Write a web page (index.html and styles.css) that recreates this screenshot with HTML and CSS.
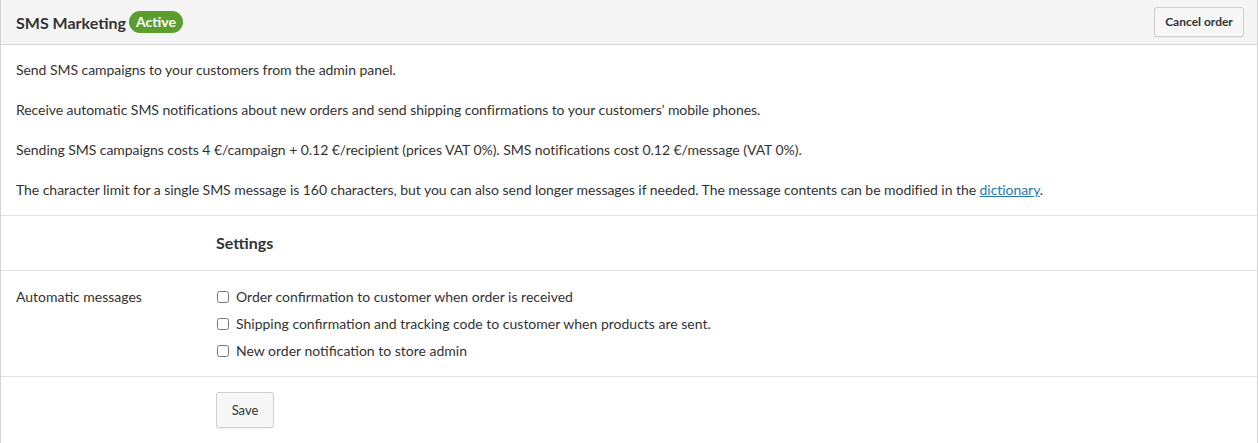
FILE: index.html
```html
<!DOCTYPE html>
<html>
<head>
<meta charset="utf-8">
<link rel="stylesheet" href="styles.css">
</head>
<body>
<div class="panel">
  <div class="panel-header">
    <div class="title"><span class="title-text">SMS Marketing</span><span class="badge">Active</span></div>
    <button class="btn btn-small">Cancel order</button>
  </div>
  <div class="intro">
    <p>Send SMS campaigns to your customers from the admin panel.</p>
    <p>Receive automatic SMS notifications about new orders and send shipping confirmations to your customers’ mobile phones.</p>
    <p>Sending SMS campaigns costs 4 €/campaign + 0.12 €/recipient (prices VAT 0%). SMS notifications cost 0.12 €/message (VAT 0%).</p>
    <p>The character limit for a single SMS message is 160 characters, but you can also send longer messages if needed. The message contents can be modified in the <a href="#">dictionary</a>.</p>
  </div>
  <div class="row row-heading">
    <div class="row-label"></div>
    <div class="row-content"><h2>Settings</h2></div>
  </div>
  <div class="row row-fields">
    <div class="row-label">Automatic messages</div>
    <div class="row-content checks">
      <label class="check"><input type="checkbox"><span>Order confirmation to customer when order is received</span></label>
      <label class="check"><input type="checkbox"><span>Shipping confirmation and tracking code to customer when products are sent.</span></label>
      <label class="check"><input type="checkbox"><span>New order notification to store admin</span></label>
    </div>
  </div>
  <div class="row row-actions">
    <div class="row-label"></div>
    <div class="row-content"><button class="btn btn-save">Save</button></div>
  </div>
</div>
</body>
</html>
```
FILE: styles.css
```css
* { box-sizing: border-box; }
html, body { margin: 0; padding: 0; background: #fff; }
body {
  font-family: Lato, "Open Sans", sans-serif;
  font-size: 14px;
  color: #333;
  width: 1258px;
  height: 443px;
  overflow: hidden;
}
.panel {
  border-left: 1px solid #d4d4d4;
  border-right: 1px solid #d4d4d4;
  min-height: 443px;
}
.panel-header {
  background: #f5f5f5;
  border-bottom: 1px solid #d8d8d8;
  height: 45px;
  display: flex;
  align-items: center;
  justify-content: space-between;
  padding: 0 13px 0 15px;
}
.title {
  display: flex;
  align-items: center;
  font-size: 16px;
  font-weight: 700;
  color: #333;
}
.badge {
  margin-left: 3px;
  background: #5b9e2d;
  color: #fff;
  font-size: 14px;
  font-weight: 700;
  height: 22px;
  line-height: 22px;
  padding: 0 7px;
  border-radius: 11px;
}
.btn {
  font-family: Lato, "Open Sans", sans-serif;
  background: #f7f7f7;
  border: 1px solid #cfcfcf;
  border-radius: 3px;
  color: #333;
  box-shadow: 0 1px 1px rgba(0,0,0,0.06);
  cursor: pointer;
}
.btn-small {
  font-size: 12px;
  font-weight: 700;
  height: 30px;
  width: 90px;
  padding: 0;
  margin-bottom: 1px;
}
.intro {
  padding: 15px 16px 15px 15px;
  border-bottom: 1px solid #e3e3e3;
}
.intro p {
  margin: 0 0 20px;
  line-height: 20px;
  letter-spacing: -0.05px;
}
.intro p:last-child { margin-bottom: 0; }
.intro a { color: #2b78b0; text-decoration: underline; }
.row {
  display: flex;
  border-bottom: 1px solid #e3e3e3;
}
.row:last-child { border-bottom: none; }
.row-label {
  width: 215px;
  flex: none;
  padding-left: 15px;
}
.row-content { flex: 1; }
.row-heading { height: 55px; align-items: center; }
.row-heading h2 {
  margin: 0;
  font-size: 16px;
  font-weight: 700;
  line-height: 22px;
  padding-bottom: 1px;
}
.row-fields { padding: 16px 0 15px; }
.row-fields .row-label { line-height: 20px; }
.checks {
  display: flex;
  flex-direction: column;
  gap: 7px;
}
.check {
  display: flex;
  align-items: center;
  line-height: 20px;
  height: 20px;
}
.check input {
  margin: 0 7px 0 1px;
  width: 12px;
  height: 12px;
}
.row-actions { padding: 15px 0 16px; }
.btn-save {
  font-size: 13px;
  width: 58px;
  height: 36px;
  padding: 0;
}
```
